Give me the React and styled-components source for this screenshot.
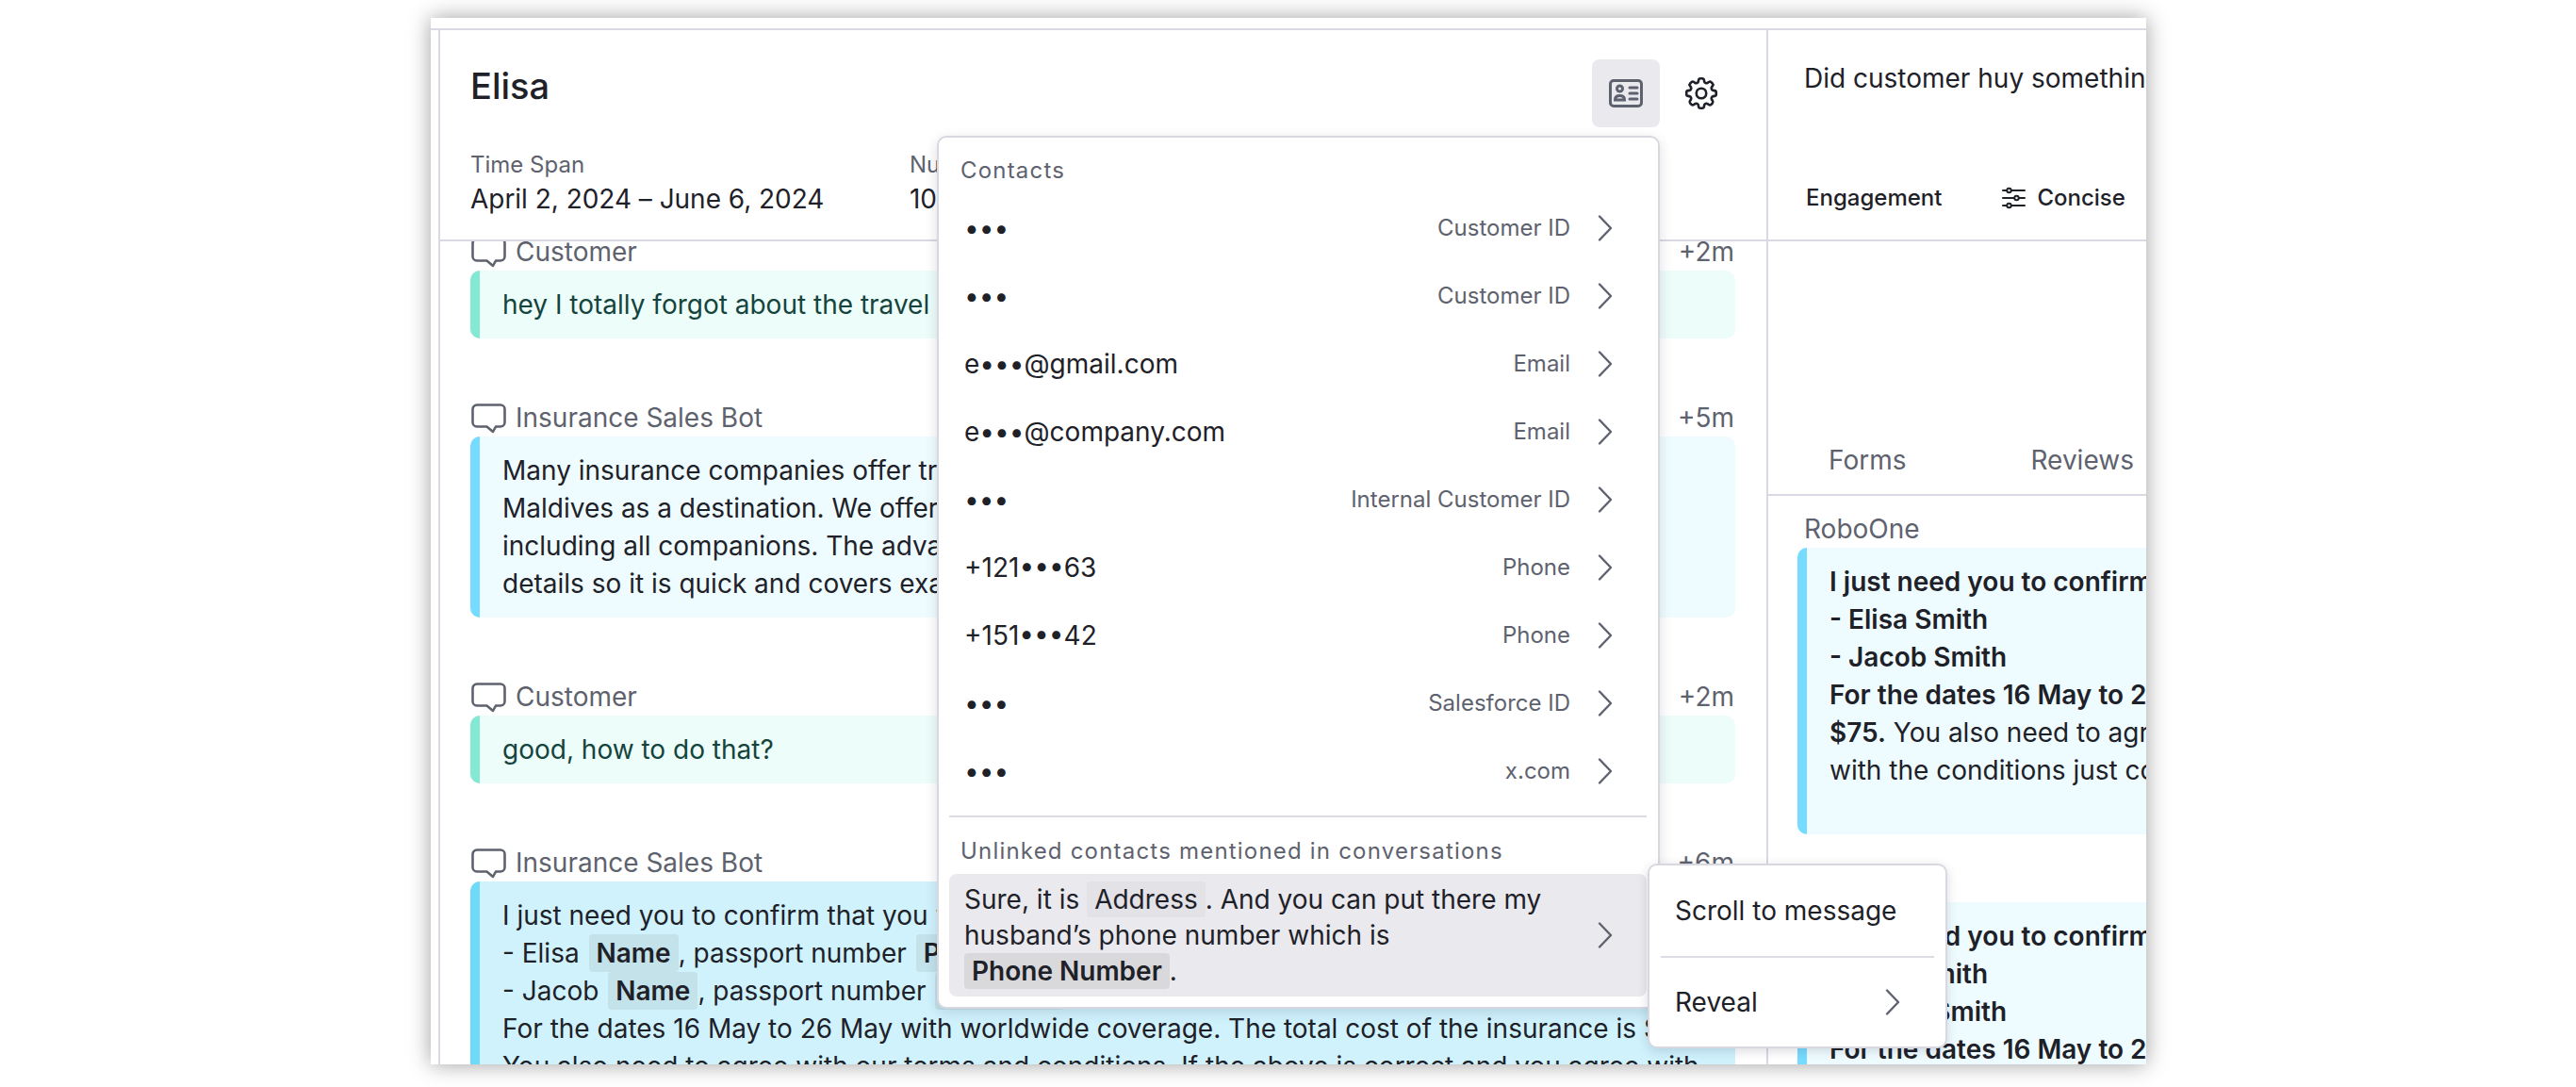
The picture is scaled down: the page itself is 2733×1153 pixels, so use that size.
import React from 'react';
import styled, { createGlobalStyle } from 'styled-components';
import { HiOutlineCog8Tooth } from 'react-icons/hi2';

const Global = createGlobalStyle`
  html, body { margin: 0; padding: 0; background: #fff; }
  body { font-family: Inter, "Liberation Sans", sans-serif; color: #1e2128; overflow: hidden; }
  * { box-sizing: border-box; }
`;
const Page = styled.div`
  width: 2733px; height: 1153px; padding: 19px 0 0 457px; overflow: hidden;
`;
const Win = styled.div`
  width: 1820px; height: 1110px; background: #fff; overflow: hidden;
  box-shadow: 0 0 22px rgba(0,0,0,.38); display: flex; flex-direction: column;
`;
const TopStrip = styled.div`
  height: 13px; flex: none; border-bottom: 2px solid #d9d9e3;
`;
const Body = styled.div`
  flex: 1; min-height: 0; display: flex;
`;
const Rail = styled.div`
  width: 10px; flex: none; border-right: 2px solid #d9d9e3;
`;
const Main = styled.section`
  width: 1409px; flex: none; border-right: 2px solid #d9d9e3; position: relative; display: flex; flex-direction: column;
`;
const Header = styled.header`
  height: 224px; flex: none; border-bottom: 2px solid #d9d9e3; padding: 31px 33px 0 32px; background: #fff;
  position: relative; z-index: 1;
`;
const TitleRow = styled.div`
  display: flex; align-items: flex-start; justify-content: space-between; height: 72px;
`;
const Title = styled.h1`
  margin: 6px 0 0; font-size: 38px; line-height: 44px; font-weight: 500; color: #1e2128;
`;
const Tools = styled.div`
  display: flex; gap: 8px;
`;
const ToolButton = styled.div`
  width: 72px; height: 72px; border-radius: 8px; display: flex; align-items: center; justify-content: center;
  background: ${p => p.$active ? '#e9e9ee' : 'transparent'}; color: ${p => p.$active ? '#5e626e' : '#1e2128'};
`;
const Meta = styled.div`
  display: flex; margin-top: 24px;
`;
const MetaItem = styled.div`
  width: 466px; flex: none;
`;
const MetaLabel = styled.div`
  font-size: 24px; line-height: 32px; color: #5e626e;
`;
const MetaValue = styled.div`
  font-size: 28px; line-height: 40px; color: #1e2128; letter-spacing: -.03px;
`;
const List = styled.div`
  flex: 1; min-height: 0; overflow: hidden; padding: 0 33px 0 32px;
`;
const ListInner = styled.div`
  margin-top: -9px;
`;
const Msg = styled.article`
  margin-bottom: 64px;
`;
const MsgHead = styled.div`
  height: 40px; display: flex; align-items: center; gap: 10px; font-size: 28px; color: #5e626e; padding-left: 1px;
`;
const Stamp = styled.span`
  margin-left: auto; margin-right: 1px;
`;
const Bubble = styled.div`
  border-radius: 10px; overflow: hidden; padding: ${p => p.$tail ? '16px 16px 48px 34px' : '16px 16px 16px 34px'};
  position: relative; font-size: 28px; line-height: 40px; white-space: nowrap;
  background: ${p => p.$bg}; color: ${p => p.$fg || '#1e2128'};
  &::before { content: ''; position: absolute; left: 0; top: 0; bottom: 0; width: 10px; background: ${p => p.$bar}; }
`;
const Chip = styled.span`
  display: inline-block; line-height: 40px; height: 40px; padding: 0 8px; margin: 0 0 0 2px; border-radius: 4px;
  background: ${p => p.$bg || '#c3e2ea'}; font-weight: 600;
`;
const Strong = styled.b`
  font-weight: 600;
`;
const Right = styled.aside`
  flex: 1; min-width: 0; overflow: hidden; display: flex; flex-direction: column;
`;
const RightTop = styled.div`
  height: 224px; flex: none; border-bottom: 2px solid #d9d9e3; padding: 31px 0 0 38px; white-space: nowrap;
`;
const Question = styled.div`
  font-size: 28px; line-height: 40px; color: #1e2128;
`;
const Controls = styled.div`
  display: flex; align-items: center; margin-top: 91px; padding-left: 2px; font-size: 24px; line-height: 32px; font-weight: 500;
`;
const Concise = styled.div`
  margin-left: 64px; display: flex; align-items: center; gap: 12px;
`;
const Tabs = styled.div`
  height: 270px; flex: none; border-bottom: 2px solid #d9d9e3; display: flex; align-items: flex-end;
  padding: 0 0 16px 64px; gap: 132px; font-size: 28px; line-height: 40px; color: #5e626e;
`;
const RightScroll = styled.div`
  flex: 1; min-height: 0; overflow: hidden; padding: 17px 0 0 31px; margin-right: -400px;
`;
const Sender = styled.div`
  font-size: 28px; line-height: 36px; color: #5e626e; padding-left: 7px; margin-bottom: 2px;
`;
const RightMsg = styled.div`
  margin-bottom: 72px;
`;
const Popover = styled.div`
  position: absolute; left: 527px; top: 112px; width: 767px; height: 926px; background: #fff; border: 2px solid #d8d8e1;
  border-radius: 10px; padding: 0 12px 0 11px; box-shadow: 0 4px 14px rgba(30,30,60,.14); z-index: 2;
`;
const PopLabel = styled.div`
  font-size: 24px; line-height: 32px; color: #5e626e; letter-spacing: 1.2px; padding-left: 12px;
  margin: ${p => p.$m};
`;
const Row = styled.div`
  height: 72px; display: flex; align-items: center; padding: 0 36px 0 16px; font-size: 28px; color: #1e2128;
`;
const RowKind = styled.span`
  margin-left: auto; margin-right: 29px; font-size: 24px; color: #5e626e; position: relative; top: -1px;
`;
const Divider = styled.div`
  height: 2px; background: #dcdce5; flex: none; margin: ${p => p.$m || 0};
`;
const Unlinked = styled.div`
  position: relative; height: 130px; background: #e9e9ee; border-radius: 8px; padding: 8px 36px 8px 16px;
  display: flex; align-items: center; justify-content: space-between;
`;
const UnlinkedText = styled.div`
  font-size: 28px; line-height: 38px; width: 640px;
`;
const SmallChip = styled.span`
  display: inline-block; height: 38px; line-height: 38px; padding: 0 8px; border-radius: 4px; vertical-align: top;
  background: ${p => p.$strong ? '#d9d9dc' : '#e2e2e7'}; font-weight: ${p => p.$strong ? 600 : 400};
`;
const Menu = styled.div`
  position: absolute; left: 741px; top: -11px; width: 318px; height: 196px; background: #fff; border: 2px solid #d8d8e1;
  border-radius: 10px; padding: 0 12px; box-shadow: 0 3px 12px rgba(30,30,60,.16); z-index: 3;
`;
const MenuRow = styled.div`
  height: ${p => p.$h}px; display: flex; align-items: center; justify-content: space-between; padding: 0 36px 0 15px; font-size: 28px; white-space: nowrap;
`;

const ChatIcon = () => (
  <svg width="37" height="32" viewBox="0 0 37 32" fill="none" stroke="#5e626e" strokeWidth="2.6" strokeLinejoin="round" style={{flex:'none', marginTop: 2}}>
    <path d="M6 1.5H31a4.5 4.5 0 0 1 4.5 4.5V20a4.5 4.5 0 0 1-4.5 4.5H26L23 30L16.5 24.5H6A4.5 4.5 0 0 1 1.5 20V6A4.5 4.5 0 0 1 6 1.5Z" />
  </svg>
);
const Chevron = ({ color = '#5e626e' }) => (
  <svg width="16" height="28" viewBox="0 0 16 28" fill="none" stroke={color} strokeWidth="2.4" strokeLinecap="round" strokeLinejoin="round" style={{flex:'none'}}>
    <path d="M2 1.5L14 14L2 26.5" />
  </svg>
);
const CardIcon = () => (
  <svg width="36" height="30" viewBox="0 0 36 30" fill="none" stroke="currentColor" strokeWidth="3" strokeLinecap="round">
    <rect x="1.5" y="1.5" width="33" height="27" rx="3.5" />
    <circle cx="11.5" cy="10" r="3" />
    <path d="M6.5 22c0-3 2.2-4.4 5-4.4s5 1.4 5 4.4Z" />
    <path d="M22 9H30M22 15H30M22 21H30" />
  </svg>
);
const SlidersIcon = () => (
  <svg width="25" height="24" viewBox="0 0 25 24" fill="none" stroke="#1e2128" strokeWidth="2" strokeLinecap="round" style={{flex:'none'}}>
    <path d="M1 4H5M10 4H24M1 12H13M18 12H24M1 20H5M10 20H24" />
    <circle cx="7.5" cy="4" r="2.2" />
    <circle cx="15.5" cy="12" r="2.2" />
    <circle cx="7.5" cy="20" r="2.2" />
  </svg>
);

const contacts = [
  ['•••', 'Customer ID'], ['•••', 'Customer ID'], ['e•••@gmail.com', 'Email'], ['e•••@company.com', 'Email'],
  ['•••', 'Internal Customer ID'], ['+121•••63', 'Phone'], ['+151•••42', 'Phone'], ['•••', 'Salesforce ID'], ['•••', 'x.com'],
];
const mint = { $bg: '#edfdfa', $bar: '#84e9d3', $fg: '#14443d' };
const sky = { $bg: '#effcff', $bar: '#76dcff' };
const active = { $bg: '#cff2fd', $bar: '#6fd9f8' };

const Head = ({ name, time }) => (
  <MsgHead><ChatIcon />{name}<Stamp>{time}</Stamp></MsgHead>
);

export default function App() {
  return (
    <Page>
      <Global />
      <Win>
        <TopStrip />
        <Body>
          <Rail />
          <Main>
            <Header>
              <TitleRow>
                <Title>Elisa</Title>
                <Tools>
                  <ToolButton $active><CardIcon /></ToolButton>
                  <ToolButton><HiOutlineCog8Tooth size={42} /></ToolButton>
                </Tools>
              </TitleRow>
              <Meta>
                <MetaItem><MetaLabel>Time Span</MetaLabel><MetaValue>April 2, 2024 – June 6, 2024</MetaValue></MetaItem>
                <MetaItem><MetaLabel>Number of Messages</MetaLabel><MetaValue>10</MetaValue></MetaItem>
              </Meta>
            </Header>
            <List>
              <ListInner>
                <Msg>
                  <Head name="Customer" time="+2m" />
                  <Bubble {...mint}>hey I totally forgot about the travel insurance for my trip</Bubble>
                </Msg>
                <Msg>
                  <Head name="Insurance Sales Bot" time="+5m" />
                  <Bubble {...sky}>
                    Many insurance companies offer travel insurance for trips with<br />
                    Maldives as a destination. We offer a single trip policy for you,<br />
                    including all companions. The advantage is that we only need your travel<br />
                    details so it is quick and covers exactly what you need.
                  </Bubble>
                </Msg>
                <Msg>
                  <Head name="Customer" time="+2m" />
                  <Bubble {...mint}>good, how to do that?</Bubble>
                </Msg>
                <Msg>
                  <Head name="Insurance Sales Bot" time="+6m" />
                  <Bubble {...active}>
                    I just need you to confirm that you want to insure these travellers:<br />
                    - Elisa <Chip>Name</Chip>, passport number <Chip>Passport</Chip><br />
                    - Jacob <Chip>Name</Chip>, passport number <Chip>Passport</Chip><br />
                    For the dates 16 May to 26 May with worldwide coverage. The total cost of the insurance is $75.<br />
                    You also need to agree with our terms and conditions. If the above is correct and you agree with
                  </Bubble>
                </Msg>
              </ListInner>
            </List>
            <Popover>
              <PopLabel $m="19px 0 9px">Contacts</PopLabel>
              {contacts.map(([value, kind], i) => (
                <Row key={i}>{value}<RowKind>{kind}</RowKind><Chevron /></Row>
              ))}
              <Divider $m="11px 0 20px" />
              <PopLabel $m="0 0 8px">Unlinked contacts mentioned in conversations</PopLabel>
              <Unlinked>
                <UnlinkedText>
                  Sure, it is <SmallChip>Address</SmallChip>. And you can put there my husband’s phone number which is <SmallChip $strong>Phone Number</SmallChip>.
                </UnlinkedText>
                <Chevron />
                <Menu>
                  <MenuRow $h={96}>Scroll to message</MenuRow>
                  <Divider />
                  <MenuRow $h={94}>Reveal<Chevron /></MenuRow>
                </Menu>
              </Unlinked>
            </Popover>
          </Main>
          <Right>
            <RightTop>
              <Question>Did customer huy something in the last month?</Question>
              <Controls>Engagement<Concise><SlidersIcon />Concise</Concise></Controls>
            </RightTop>
            <Tabs><span>Forms</span><span>Reviews</span></Tabs>
            <RightScroll>
              <Sender>RoboOne</Sender>
              <RightMsg>
                <Bubble {...sky} $tail>
                  <Strong>I just need you to confirm that you want to insure<br />- Elisa Smith<br />- Jacob Smith<br />For the dates 16 May to 26 May with worldwide coverage at<br />$75.</Strong> You also need to agree with our terms and conditions<br />with the conditions just confirm with me.
                </Bubble>
              </RightMsg>
              <Bubble {...sky}>
                <Strong>I just need you to confirm that you want to insure<br />- Elisa Smith<br />- Jacob Smith<br />For the dates 16 May to 26 May with worldwide coverage</Strong>
              </Bubble>
            </RightScroll>
          </Right>
        </Body>
      </Win>
    </Page>
  );
}
